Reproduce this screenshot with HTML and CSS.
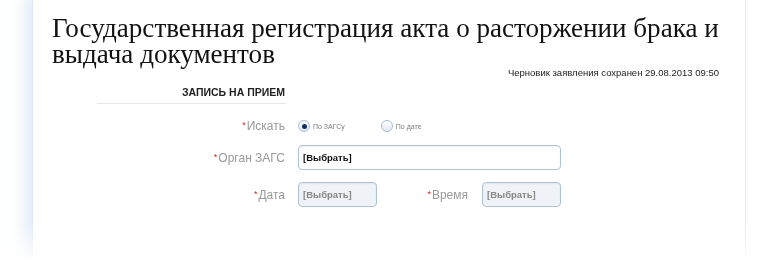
FILE: index.html
```html
<!DOCTYPE html>
<html lang="ru">
<head>
<meta charset="utf-8">
<title>Запись на прием</title>
<link rel="stylesheet" href="styles.css">
</head>
<body>
<div class="page">
  <div class="card">
    <h1 class="title">Государственная регистрация акта о расторжении брака и<br>выдача документов</h1>
    <div class="draft">Черновик заявления сохранен 29.08.2013 09:50</div>
    <div class="section">
      <div class="section-head">ЗАПИСЬ НА ПРИЕМ</div>
    </div>
    <div class="form">
      <div class="row">
        <div class="label"><span class="req">*</span>Искать</div>
        <div class="field radios">
          <label class="radio"><span class="dot on"></span><span class="rtext">По ЗАГСу</span></label>
          <label class="radio"><span class="dot"></span><span class="rtext">По дате</span></label>
        </div>
      </div>
      <div class="row">
        <div class="label"><span class="req">*</span>Орган ЗАГС</div>
        <div class="field"><div class="input wide">[Выбрать]</div></div>
      </div>
      <div class="row">
        <div class="label"><span class="req">*</span>Дата</div>
        <div class="field pair">
          <div class="input small disabled">[Выбрать]</div>
          <div class="label2"><span class="req">*</span>Время</div>
          <div class="input small disabled">[Выбрать]</div>
        </div>
      </div>
    </div>
  </div>
</div>
</body>
</html>
```
FILE: styles.css
```css
html, body {
  margin: 0;
  padding: 0;
  background: #ffffff;
  overflow: hidden;
}
body {
  width: 777px;
  height: 271px;
  font-family: "Liberation Sans", Arial, sans-serif;
}
.page {
  padding-left: 32px;
  width: 714px;
  height: 271px;
  overflow: hidden;
  -webkit-mask-image: linear-gradient(to bottom, #000 0, #000 225px, transparent 262px);
  mask-image: linear-gradient(to bottom, #000 0, #000 225px, transparent 262px);
}
.card {
  background: #fff;
  height: 300px;
  border-left: 1px solid #dfe9f5;
  border-right: 1px solid #dfe9f5;
  box-shadow: 0 0 18px 5px rgba(195, 214, 238, 0.6);
  padding: 0 26px 0 19px;
}
.title {
  margin: 0;
  padding-top: 15px;
  font-family: "Liberation Serif", "Times New Roman", serif;
  font-weight: normal;
  font-size: 27.1px;
  line-height: 26px;
  color: #111;
}
.draft {
  text-align: right;
  font-size: 9.5px;
  color: #222;
  margin-top: 0;
  line-height: 12px;
}
.section {
  margin-left: 45px;
  width: 189px;
  border-bottom: 1px solid #e6e6e6;
  padding-top: 7px;
  padding-bottom: 5px;
}
.section-head {
  text-align: right;
  font-size: 10.5px;
  font-weight: bold;
  color: #222;
  line-height: 12px;
  padding-right: 1px;
}
.form {
  margin-top: 15px;
}
.row {
  display: grid;
  grid-template-columns: 233px 1fr;
  column-gap: 13px;
  align-items: center;
  margin-bottom: 12px;
}
.label, .label2 {
  text-align: right;
  font-size: 12px;
  color: #999999;
}
.req {
  color: #d21f1f;
  font-size: 9px;
  margin-right: 1px;
  vertical-align: 2px;
}
.radios {
  display: flex;
  gap: 36px;
  align-items: center;
  height: 14px;
}
.radio {
  display: flex;
  align-items: center;
  gap: 3px;
}
.dot {
  width: 10px;
  height: 10px;
  border-radius: 50%;
  border: 1px solid #a8bcd4;
  background: linear-gradient(#ffffff, #e1e9f4);
  position: relative;
  box-sizing: content-box;
}
.dot.on::after {
  content: "";
  position: absolute;
  left: 2.5px;
  top: 2.5px;
  width: 5px;
  height: 5px;
  border-radius: 50%;
  background: #0d2e6a;
}
.rtext {
  font-size: 7px;
  color: #7a7a7a;
}
.input {
  box-sizing: border-box;
  height: 25px;
  border: 1px solid #aec2d8;
  border-radius: 4px;
  background: #fff;
  font-size: 9.5px;
  font-weight: bold;
  color: #111;
  display: flex;
  align-items: center;
  padding-left: 4px;
  box-shadow: inset 0 1px 2px rgba(0, 0, 0, 0.06);
}
.wide {
  width: 263px;
}
.small {
  width: 79px;
}
.disabled {
  background: #eff3f8;
  color: #888;
}
.pair {
  display: flex;
  align-items: center;
}
.label2 {
  width: 105px;
  padding-right: 14px;
  box-sizing: border-box;
}
```
